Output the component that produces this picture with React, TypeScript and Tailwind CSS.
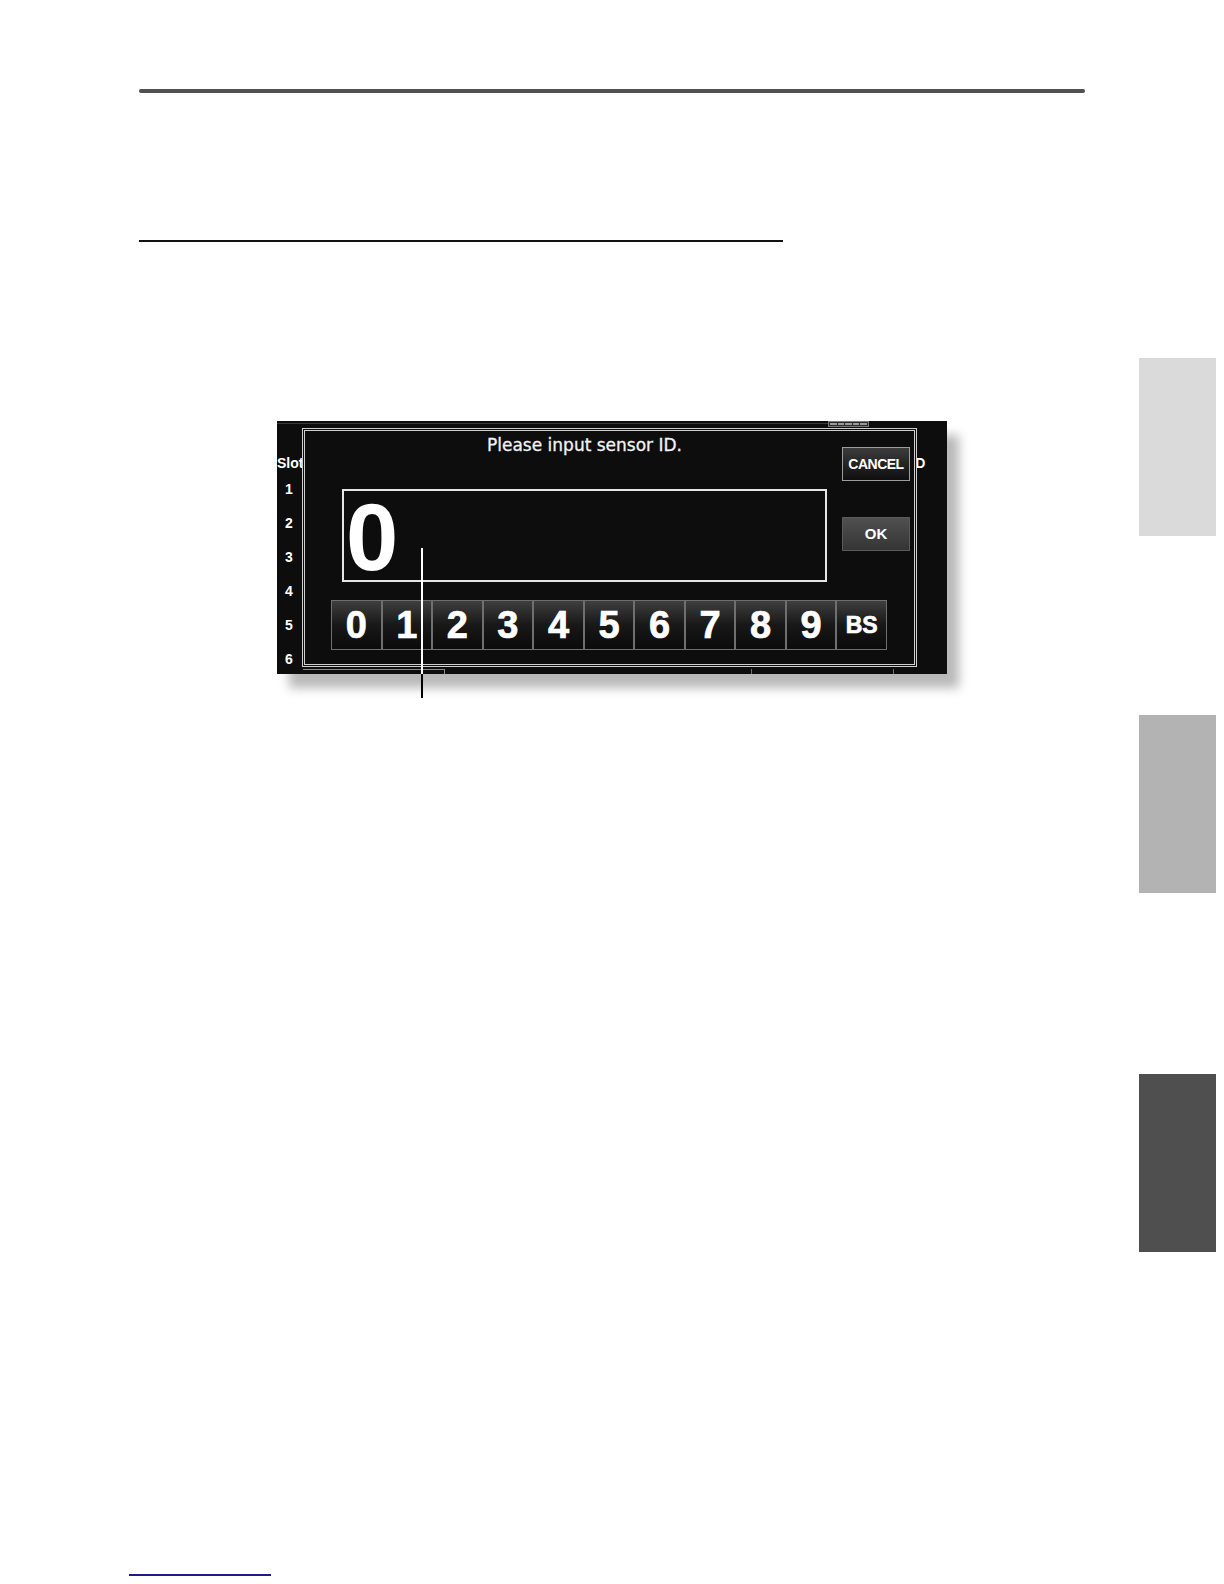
const KEYS = ['0', '1', '2', '3', '4', '5', '6', '7', '8', '9', 'BS'];
const SLOTS = ['1', '2', '3', '4', '5', '6'];

function Battery() {
  return (
    <div className="flex h-[6px] w-[41px] gap-[1px] border border-[#7a7a7a] bg-[#2a2a2a] p-[1px]">
      {[0, 1, 2, 3, 4].map(i => (
        <div key={i} className="flex-1 bg-[#9a9a9a]" />
      ))}
    </div>
  );
}

function Keypad() {
  return (
    <div className="grid h-[50px] w-[556px] grid-cols-11">
      {KEYS.map(k => (
        <div
          key={k}
          className="flex items-center justify-center border border-[#6f6f6f] bg-linear-to-b from-[#3f3f3f] via-[#181818] to-[#0b0b0b] font-['Liberation_Sans',Arial,sans-serif] font-bold leading-none text-white [-webkit-text-stroke:0.7px_white]"
        >
          <span className={k === 'BS' ? 'text-[23px]' : 'text-[38px]'}>{k}</span>
        </div>
      ))}
    </div>
  );
}

function Dialog() {
  return (
    <div className="absolute left-[25px] top-[7px] h-[239px] w-[615px] border-[3px] border-double border-[#cfcfcf] bg-[#0d0d0d]">
      <div className="flex items-start">
        <div className="ml-[37px] w-[485px]">
          <p className="mt-[4px] h-[20px] text-center font-['DejaVu_Sans',sans-serif] text-[17px] font-normal leading-[20px] text-[#f2f2f2] [-webkit-text-stroke:0.3px_#f2f2f2]">
            Please input sensor ID.
          </p>
          <div className="mt-[34px] h-[93px] border-2 border-[#e6e6e6]">
            <span className="block pl-[2px] font-['Liberation_Sans',Arial,sans-serif] text-[94px] font-bold leading-none text-white">
              0
            </span>
          </div>
        </div>
        <div className="ml-[15px] flex w-[68px] flex-col">
          <button className="mt-[16px] flex h-[34px] items-center justify-center border border-[#9c9c9c] bg-linear-to-b from-[#3c3c3c] to-[#0f0f0f] font-['Liberation_Sans',Arial,sans-serif] text-[14px] font-bold tracking-[-0.5px] text-white">
            CANCEL
          </button>
          <button className="mt-[36px] flex h-[34px] items-center justify-center border border-[#5a5a5a] bg-linear-to-b from-[#505050] to-[#353535] font-['Liberation_Sans',Arial,sans-serif] text-[15px] font-bold text-white">
            OK
          </button>
        </div>
      </div>
      <div className="ml-[26px] mt-[18px]">
        <Keypad />
      </div>
    </div>
  );
}

function Screen() {
  return (
    <div className="relative h-[253px] w-[670px] bg-[#0d0d0d] font-['Liberation_Sans',Arial,sans-serif] text-[14px] font-bold text-white shadow-[12px_14px_10px_rgba(0,0,0,0.28)]">
      <div className="flex h-[8px] items-start">
        <div className="mt-[2px] h-[1px] w-[551px] bg-[#3a3a3a]" />
        <Battery />
      </div>
      <div className="mt-[25px] flex h-[18px] items-center leading-[18px]">
        <span>Slot</span>
        <span className="ml-[608px]">ID</span>
      </div>
      <div className="flex h-[197px] w-[24px] flex-col">
        {SLOTS.map(s => (
          <div key={s} className="flex h-[34px] shrink-0 items-center justify-center">
            {s}
          </div>
        ))}
      </div>
      <div className="ml-[26px] flex h-[5px]">
        <div className="w-[142px] border-r border-t border-[#8a8a8a]" />
        <div className="w-[307px] border-r border-[#707070]" />
        <div className="w-[142px] border-r border-[#707070]" />
      </div>

      <Dialog />

      {/* callout leader */}
      <div className="absolute left-[144px] top-[127px] flex w-[2px] flex-col">
        <div className="h-[126px] bg-white" />
        <div className="h-[24px] bg-black" />
      </div>
    </div>
  );
}

export default function App() {
  return (
    <div className="flex h-[1584px] w-[1224px] overflow-hidden bg-white">
      <div className="flex flex-1 flex-col">
        <div className="ml-[139px] mt-[89px] h-[4px] w-[946px] rounded-full bg-[#505050]" />
        <div className="ml-[139px] mt-[147px] h-[2px] w-[644px] bg-[#111]" />
        <div className="ml-[277px] mt-[179px]">
          <Screen />
        </div>
        <div className="mb-[8px] ml-[129px] mt-auto h-[2px] w-[142px] bg-[#1c1c8e]" />
      </div>
      <div className="mr-[8px] flex w-[77px] flex-col">
        <div className="mt-[358px] h-[178px] bg-[#dadada]" />
        <div className="mt-[179px] h-[178px] bg-[#b3b3b3]" />
        <div className="mt-[181px] h-[178px] bg-[#4f4f4f]" />
      </div>
    </div>
  );
}
